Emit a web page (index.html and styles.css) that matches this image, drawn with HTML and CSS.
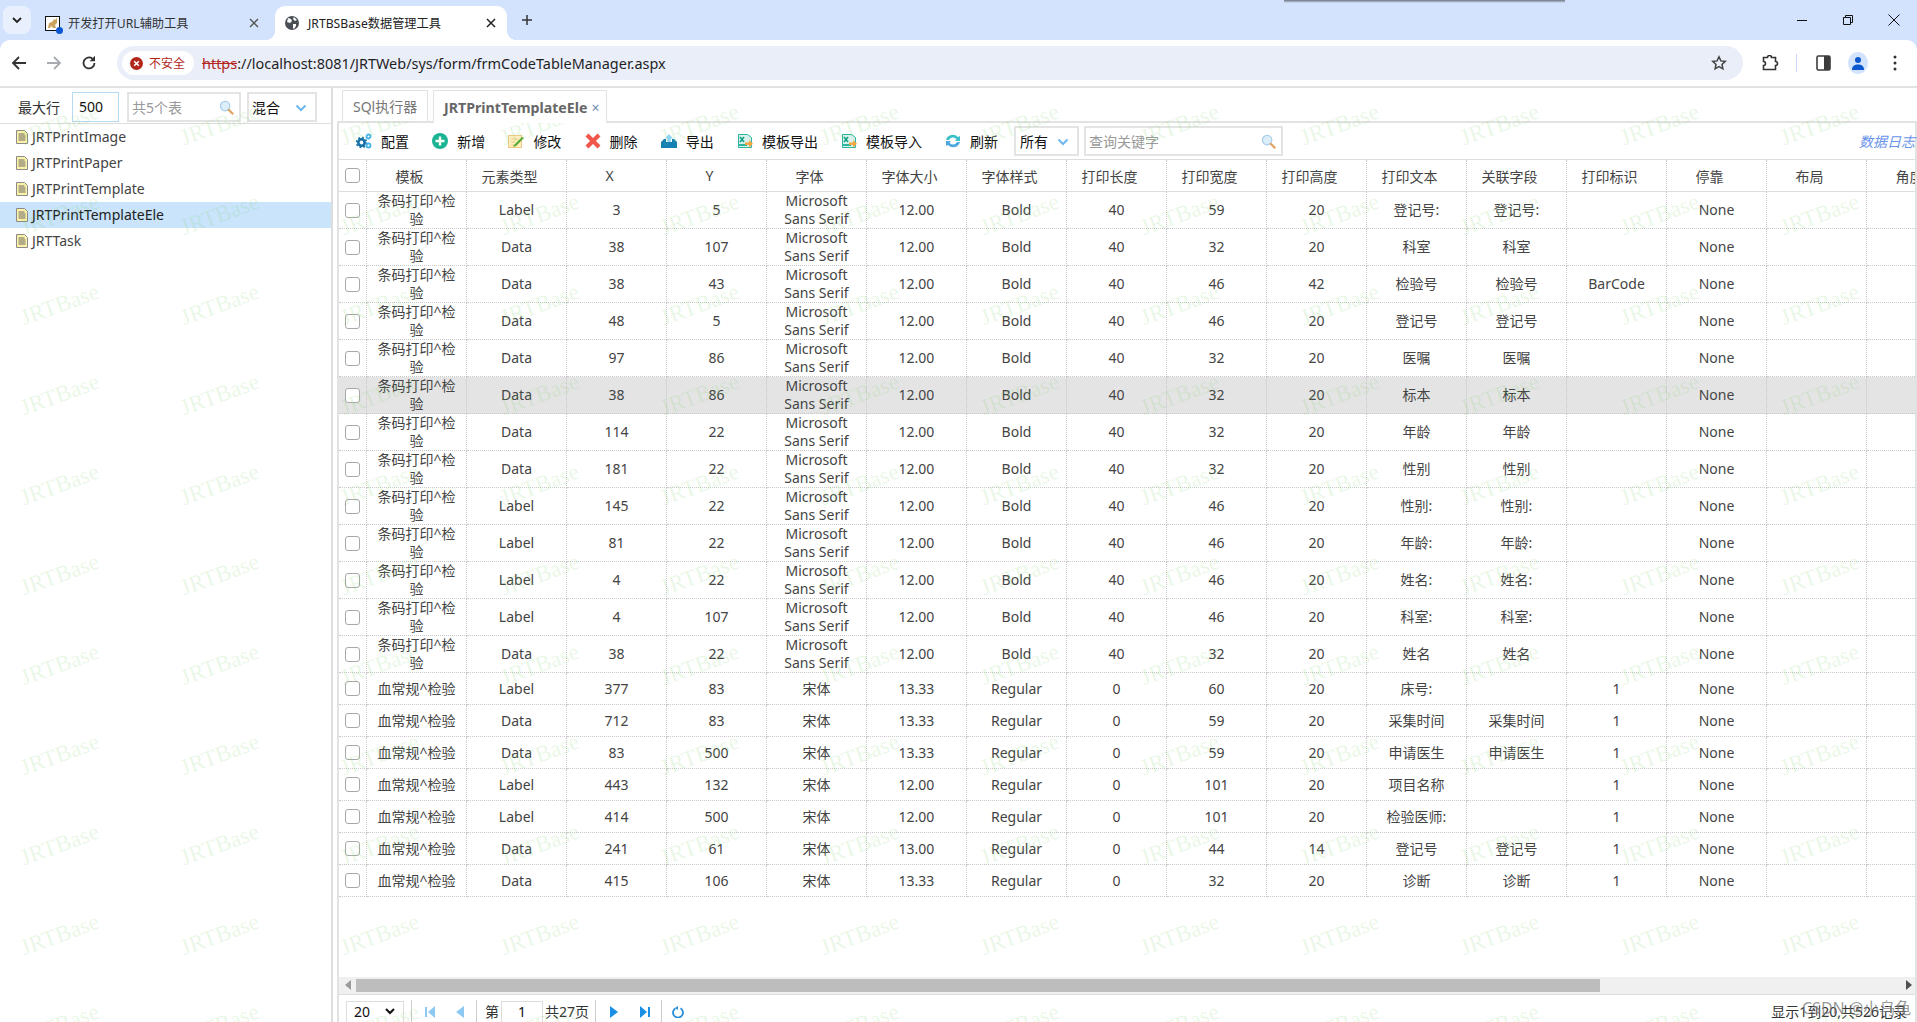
FILE: index.html
```html
<!DOCTYPE html>
<html lang="zh-CN">
<head>
<meta charset="utf-8">
<title>JRTBSBase数据管理工具</title>
<link rel="stylesheet" href="styles.css">
</head>
<body>
<svg class="sprite" aria-hidden="true">
  <symbol id="doc" viewBox="0 0 12 14"><path d="M.5.5h8l3 3v10H.5z" fill="#fdf3a8" stroke="#8a8a8a"/><path d="M2.5 4h6M2.5 6h7M2.5 8h7M2.5 10h7" stroke="#666" fill="none"/></symbol>
  <symbol id="lens" viewBox="0 0 16 16"><circle cx="6.5" cy="6.5" r="5" fill="#dbeefa" stroke="#a9cfe8" stroke-width="1.4"/><path d="M10.5 10.5l4 4" stroke="#e0a868" stroke-width="2.4" stroke-linecap="round"/></symbol>
  <symbol id="chev" viewBox="0 0 12 8"><path d="M1.5 1.5L6 6l4.5-4.5" fill="none" stroke="#6db7ee" stroke-width="2"/></symbol>
  <symbol id="xls" viewBox="0 0 16 16"><path d="M1.500 1.500h9l4 3v10h-13z" fill="#d7f2ec" stroke="#2cb59a"/><path d="M3 4l4 5M7 4L3 9" stroke="#18a085" stroke-width="1.600"/><path d="M2 12h8" stroke="#2cb59a" stroke-width="2"/></symbol>
</svg>

<header class="tabstrip">
  <div class="tab-menu"><svg width="12" height="8" viewBox="0 0 12 8"><path d="M2 2l4 4 4-4" fill="none" stroke="#222" stroke-width="1.800"/></svg></div>
  <div class="tab tab-idle">
    <span class="fav-cat">
      <svg width="15" height="15" viewBox="0 0 15 15"><rect x=".5" y=".5" width="14" height="14" fill="#fff" stroke="#111"/><path d="M3 12l1-5 3-1 2-3 1 1 2-2v5l-2 2 1 3H8L6 10l-1 2z" fill="#c9a35f"/></svg>
      <i class="fav-dot"></i>
    </span>
    <span class="tab-title">开发打开URL辅助工具</span>
    <svg class="tab-x" width="10" height="10" viewBox="0 0 10 10"><path d="M1 1l8 8M9 1L1 9" stroke="#555" stroke-width="1.400"/></svg>
  </div>
  <div class="tab tab-on">
    <svg width="14" height="14" viewBox="0 0 14 14"><circle cx="7" cy="7" r="7" fill="#4a4f55"/><path d="M3 2l3 1 1 2-2 2-3-1zM8 8l3 0 0 2-2 3-1-1zM9 1l3 3-2 1-2-2z" fill="#fff"/></svg>
    <span class="tab-title">JRTBSBase数据管理工具</span>
    <svg class="tab-x" width="10" height="10" viewBox="0 0 10 10"><path d="M1 1l8 8M9 1L1 9" stroke="#222" stroke-width="1.500"/></svg>
  </div>
  <svg class="tab-plus" width="12" height="12" viewBox="0 0 12 12"><path d="M6 1v10M1 6h10" stroke="#333" stroke-width="1.500"/></svg>
  <div class="winctl">
    <svg width="12" height="12" viewBox="0 0 12 12"><path d="M1 6.500h10" stroke="#111" stroke-width="1"/></svg>
    <svg width="12" height="12" viewBox="0 0 12 12"><path d="M1.500 3.500h7v7h-7zM3.500 3.500v-2h7v7h-2" fill="none" stroke="#111"/></svg>
    <svg width="12" height="12" viewBox="0 0 12 12"><path d="M.5.5l11 11M11.500.5l-11 11" stroke="#111"/></svg>
  </div>
  <i class="strip-shadow"></i>
</header>

<nav class="addr">
  <svg class="nav-ic" width="16" height="16" viewBox="0 0 16 16"><path d="M15 8H2M8 2L2 8l6 6" fill="none" stroke="#333" stroke-width="1.800"/></svg>
  <svg class="nav-ic" width="16" height="16" viewBox="0 0 16 16"><path d="M1 8h13M8 2l6 6-6 6" fill="none" stroke="#a8abb0" stroke-width="1.800"/></svg>
  <svg class="nav-ic" width="16" height="16" viewBox="0 0 16 16"><path d="M13.500 8A5.500 5.500 0 1 1 11.500 3.700" fill="none" stroke="#333" stroke-width="1.800"/><path d="M14 .8v5.400H8.600z" fill="#333"/></svg>
  <div class="omni">
    <div class="insecure">
      <svg width="13" height="13" viewBox="0 0 13 13"><circle cx="6.500" cy="6.500" r="6.500" fill="#b3261e"/><path d="M4.200 4.200l4.600 4.600M8.800 4.200L4.200 8.800" stroke="#fff" stroke-width="1.600"/></svg>
      <span>不安全</span>
    </div>
    <div class="url"><s class="scheme">https</s>://localhost:8081/JRTWeb/sys/form/frmCodeTableManager.aspx</div>
    <svg class="star" width="16" height="16" viewBox="0 0 16 16"><path d="M8 1.800l1.900 4.100 4.400.5-3.300 3 .9 4.400L8 11.600l-3.900 2.200.9-4.400-3.300-3 4.400-.5z" fill="none" stroke="#444" stroke-width="1.500"/></svg>
  </div>
  <svg class="puzzle" width="17" height="17" viewBox="0 0 17 17"><path d="M1.500 2.500h4a2 2 0 0 1 4 0h4v4a2 2 0 0 1 0 4v4h-12v-4a2 2 0 0 0 0-4z" fill="none" stroke="#333" stroke-width="1.600"/></svg>
  <i class="addr-div"></i>
  <svg class="panel-ic" width="15" height="16" viewBox="0 0 15 16"><rect x="1" y="1" width="13" height="14" rx="1.500" fill="#fff" stroke="#3c3c3c" stroke-width="1.600"/><rect x="8" y="1" width="6" height="14" fill="#3c3c3c"/></svg>
  <div class="profile"><svg width="14" height="14" viewBox="0 0 14 14"><circle cx="7" cy="4" r="3" fill="#0b57d0"/><path d="M1 14c0-4 2.500-5.500 6-5.500s6 1.500 6 5.500z" fill="#0b57d0"/></svg></div>
  <svg class="dots" width="4" height="16" viewBox="0 0 4 16"><circle cx="2" cy="2" r="1.500" fill="#333"/><circle cx="2" cy="8" r="1.500" fill="#333"/><circle cx="2" cy="14" r="1.500" fill="#333"/></svg>
</nav>

<main class="app">
  <aside class="side">
    <div class="side-bar">
      <label class="side-label">最大行</label>
      <input class="field field-max" value="500">
      <div class="field field-find"><span class="ph">共5个表</span><svg class="lens"><use href="#lens"/></svg></div>
      <div class="field field-mix"><span>混合</span><svg class="chev"><use href="#chev"/></svg></div>
    </div>
    <ul class="tree">
      <li class="tree-row"><svg class="doc"><use href="#doc"/></svg><span>JRTPrintImage</span></li>
      <li class="tree-row"><svg class="doc"><use href="#doc"/></svg><span>JRTPrintPaper</span></li>
      <li class="tree-row"><svg class="doc"><use href="#doc"/></svg><span>JRTPrintTemplate</span></li>
      <li class="tree-row is-on"><svg class="doc"><use href="#doc"/></svg><span>JRTPrintTemplateEle</span></li>
      <li class="tree-row"><svg class="doc"><use href="#doc"/></svg><span>JRTTask</span></li>
    </ul>
  </aside>

  <section class="main">
    <div class="tabs">
      <div class="ptab ptab-sql">SQl执行器</div>
      <div class="ptab ptab-on"><b>JRTPrintTemplateEle</b><span class="ptab-x">×</span></div>
    </div>
    <div class="panel">
      <div class="tools">
        <div class="btn"><svg class="ti" viewBox="0 0 16 16"><circle cx="5.500" cy="9.500" r="3.200" fill="none" stroke="#1670a6" stroke-width="2.600"/><circle cx="5.500" cy="9.500" r="5" fill="none" stroke="#1670a6" stroke-width="1.600" stroke-dasharray="1.900 2"/><circle cx="12.500" cy="3.500" r="2" fill="none" stroke="#45b4e8" stroke-width="1.800"/><circle cx="12.500" cy="12.500" r="2" fill="none" stroke="#45b4e8" stroke-width="1.800"/></svg><span>配置</span></div>
        <div class="btn"><svg class="ti" viewBox="0 0 16 16"><circle cx="8" cy="8" r="8" fill="#1ab394"/><path d="M8 3.500v9M3.500 8h9" stroke="#f4fff4" stroke-width="2.400"/></svg><span>新增</span></div>
        <div class="btn"><svg class="ti" viewBox="0 0 16 16"><rect x=".5" y="2.500" width="13" height="12" fill="#fdeebf" stroke="#f0c987"/><path d="M3 6h7M3 9h4M3 12h3" stroke="#f0c987"/><path d="M6 12l8-8 2 1-8 8-3 1z" fill="#55a92f"/></svg><span>修改</span></div>
        <div class="btn"><svg class="ti" viewBox="0 0 16 16"><path d="M2 2l12 12M14 2L2 14" stroke="#f0564a" stroke-width="4.200"/></svg><span>删除</span></div>
        <div class="btn"><svg class="ti" viewBox="0 0 16 16"><path d="M0 9l3-3h2v3h6V6h2l3 3v6H0z" fill="#1580b4"/><path d="M8 1l4 4.500H9.700V9H6.300V5.500H4z" fill="#8fd3f4"/></svg><span>导出</span></div>
        <div class="btn btn-wide"><svg class="ti" viewBox="0 0 16 16"><use href="#xls"/><path d="M8 9.500h4V7l4 3.700-4 3.700V12H8z" fill="#f4a640"/></svg><span>模板导出</span></div>
        <div class="btn btn-wide"><svg class="ti" viewBox="0 0 16 16"><use href="#xls"/><path d="M8 9.500h4V7l4 3.700-4 3.700V12H8z" fill="#f4a640"/></svg><span>模板导入</span></div>
        <div class="btn btn-last"><svg class="ti" viewBox="0 0 16 16"><path d="M1 7a7 7 0 0 1 12-3l2-1v5h-5l1.500-1.700A4.500 4.500 0 0 0 4 7z" fill="#3cc0c8"/><path d="M15 9a7 7 0 0 1-12 3l-2 1V8h5L4.500 9.700A4.500 4.500 0 0 0 12 9z" fill="#4fa8e0"/></svg><span>刷新</span></div>
        <div class="field field-all"><span>所有</span><svg class="chev"><use href="#chev"/></svg></div>
        <div class="field field-key"><span class="ph">查询关键字</span><svg class="lens"><use href="#lens"/></svg></div>
        <a class="log">数据日志</a>
      </div>
      <div class="gridwrap">
        <table class="grid">
          <thead id="ghead"></thead>
          <tbody id="gbody"></tbody>
        </table>
      </div>
      <div class="hscroll">
        <svg class="sa" width="6" height="10" viewBox="0 0 6 10"><path d="M6 0v10L0 5z" fill="#9a9a9a"/></svg>
        <div class="thumb"></div>
        <svg class="sa sa-r" width="6" height="10" viewBox="0 0 6 10"><path d="M0 0v10l6-5z" fill="#505050"/></svg>
      </div>
      <div class="pager">
        <div class="pg-size"><span>20</span><svg width="10" height="7" viewBox="0 0 10 7"><path d="M1 1l4 4 4-4" fill="none" stroke="#111" stroke-width="2"/></svg></div>
        <i class="pg-sep"></i>
        <svg class="pg-ic pg-first" width="10" height="12" viewBox="0 0 10 12"><path d="M0 1h2v10H0zM10 0v12L3 6z" fill="#8dc8f3"/></svg>
        <svg class="pg-ic pg-prev" width="8" height="12" viewBox="0 0 8 12"><path d="M8 0v12L0 6z" fill="#8dc8f3"/></svg>
        <i class="pg-sep pg-sep2"></i>
        <span class="pg-t">第</span>
        <input class="pg-no" value="1">
        <span class="pg-t">共27页</span>
        <i class="pg-sep pg-sep3"></i>
        <svg class="pg-ic pg-next" width="8" height="12" viewBox="0 0 8 12"><path d="M0 0v12l8-6z" fill="#1a8fe3"/></svg>
        <svg class="pg-ic pg-last" width="10" height="12" viewBox="0 0 10 12"><path d="M0 0v12l7-6zM8 1h2v10H8z" fill="#1a8fe3"/></svg>
        <i class="pg-sep pg-sep4"></i>
        <svg class="pg-ic pg-ref" width="12" height="12" viewBox="0 0 12 12"><path d="M3.500 2.200A5 5 0 1 0 8.500 2.200" fill="none" stroke="#2a8fd8" stroke-width="1.800"/><path d="M6 0v4L3 2z" fill="#2a8fd8"/></svg>
        <span class="pg-info">显示1到20,共526记录</span>
      </div>
    </div>
  </section>
</main>

<div class="wm" id="wm" aria-hidden="true"></div>
<div class="csdn">CSDN @小乌龟</div>
<script src="app.js"></script>
</body>
</html>
```

FILE: styles.css
```css
* { box-sizing: border-box; }
html, body { margin: 0; height: 100%; }
body {
  width: 1917px; height: 1022px; overflow: hidden; position: relative;
  display: flex; flex-direction: column; background: #fff; color: #333;
  font: 14px "Noto Sans", "Noto Sans CJK SC", sans-serif;
}
.sprite { position: absolute; width: 0; height: 0; }
ul { list-style: none; margin: 0; padding: 0; }

/* tab strip */
.tabstrip { height: 40px; flex: none; background: #d3e3fd; display: flex; align-items: flex-end; position: relative; font-size: 12.2px; color: #333; }
.tab-menu { position: relative; top: -6px; margin-left: 3px; width: 28px; height: 28px; border-radius: 8px; background: #e9f0fd; display: flex; align-items: center; justify-content: center; }
.tab { height: 34px; display: flex; align-items: center; position: relative; }
.tab-idle { width: 244px; padding: 0 16px 0 14px; }
.tab-on { width: 232px; padding: 0 11px 0 10px; background: #fff; border-radius: 10px 10px 0 0; color: #222; }
.tab-on::before, .tab-on::after { content: ""; position: absolute; bottom: 0; width: 10px; height: 10px; }
.tab-on::before { left: -10px; background: radial-gradient(circle at 0 0, #d3e3fd 10px, #fff 10.500px); }
.tab-on::after { right: -10px; background: radial-gradient(circle at 100% 0, #d3e3fd 10px, #fff 10.500px); }
.tab-title { margin-left: 8px; white-space: nowrap; }
.tab-on .tab-title { margin-left: 9px; }
.tab-x { margin-left: auto; }
.fav-cat { position: relative; display: flex; width: 15px; height: 15px; }
.fav-dot { position: absolute; right: -3px; bottom: -3px; width: 7px; height: 7px; border-radius: 50%; background: #0b57d0; }
.tab-plus { position: relative; top: -14px; margin-left: 14px; }
.winctl { position: absolute; right: 17px; top: 14px; display: flex; gap: 34px; }
.strip-shadow { position: absolute; left: 1284px; top: 0; width: 281px; height: 3px; background: linear-gradient(#6d7480, #d3e3fd); }

/* address row */
.addr { height: 46px; flex: none; display: flex; align-items: center; padding-left: 11px; background: #fff; border-radius: 10px 10px 0 0; box-shadow: 0 -10px 0 #d3e3fd; }
.nav-ic { margin-right: 19px; flex: none; }
.nav-ic:nth-of-type(3) { margin-right: 0; }
.omni { width: 1626px; margin-left: 20px; height: 34px; border-radius: 17px; background: #e9eef9; display: flex; align-items: center; padding-left: 5px; flex: none; }
.insecure { width: 72px; height: 24px; border-radius: 12px; background: #fff; display: flex; align-items: center; padding-left: 8px; gap: 6px; font-size: 12px; color: #b3261e; }
.url { margin-left: 8px; font-size: 14.45px; color: #1f1f1f; white-space: nowrap; }
.scheme { color: #b3261e; }
.star { margin-left: auto; margin-right: 16px; }
.puzzle { margin-left: 19px; flex: none; }
.addr-div { width: 1px; height: 18px; background: #c6d8f6; margin-left: 17px; flex: none; }
.panel-ic { margin-left: 19px; flex: none; }
.profile { width: 20px; height: 22px; border-radius: 50%; background: #d3e3fd; margin-left: 17px; display: flex; align-items: center; justify-content: center; flex: none; }
.dots { margin-left: 25px; flex: none; }

/* app */
.app { flex: 1; min-height: 0; display: flex; border-top: 2px solid #e2e2e2; overflow: hidden; }
.side { width: 333px; flex: none; border-right: 2px solid #ddd; }
.side-bar { height: 36px; border-bottom: 1px solid #ddd; display: flex; align-items: center; padding-top: 2px; }
.side-label { margin-left: 18px; width: 54px; color: #333; }
.field { height: 30px; border: 2px solid #e4e4e4; display: flex; align-items: center; position: relative; background: transparent; font: inherit; color: #111; }
.field-max { width: 47px; padding: 0 0 0 6px; border: 1px solid #b5daf4; outline: 0; }
.field-find { width: 114px; margin-left: 8px; padding-left: 3px; }
.field-mix { width: 70px; margin-left: 6px; padding-left: 3px; }
.ph { color: #999; }
.lens { position: absolute; right: 5px; top: 6px; width: 15px; height: 15px; }
.chev { position: absolute; right: 8px; top: 10px; width: 12px; height: 8px; }
.tree-row { height: 26px; display: flex; align-items: center; padding-left: 16px; color: #444; white-space: nowrap; }
.tree-row span { position: relative; top: -1px; }
.tree-row.is-on { background: #c9e4fb; color: #222; }
.doc { width: 12px; height: 14px; margin-right: 4px; flex: none; }

.main { width: 1580px; margin-left: 4px; flex: none; display: flex; flex-direction: column; min-height: 0; }
.tabs { height: 33px; padding: 2px 0 0 5px; display: flex; gap: 5px; flex: none; }
.ptab { height: 33px; border: 1px solid #e2e2e2; border-bottom: 0; background: #fff; display: flex; align-items: center; color: #777; position: relative; z-index: 1; }
.ptab-sql { width: 86px; height: 31px; padding-left: 10px; }
.ptab-on { width: 174px; padding-left: 10px; color: #666; }
.ptab-on b { font-weight: 700; font-size: 14.2px; }
.ptab-x { margin-left: 4px; color: #6d8bb0; }
.panel { flex: 1; min-height: 0; display: flex; flex-direction: column; border: 2px solid #e2e2e2; border-bottom: 0; }
.tools { height: 37px; flex: none; display: flex; align-items: center; border-bottom: 1px solid #ddd; padding-left: 17px; color: #111; white-space: nowrap; }
.btn { width: 76.2px; display: flex; align-items: center; gap: 9px; flex: none; }
.btn-wide { width: 104px; }
.btn-last { width: 69px; }
.ti { width: 16px; height: 16px; flex: none; }
.field-all { width: 65px; padding-left: 4px; height: 30px; }
.field-key { width: 199px; margin-left: 5px; padding-left: 3px; }
.log { margin-left: auto; font-style: italic; color: #6a94ea; }

.gridwrap { flex: 1; min-height: 0; overflow: hidden; }
.grid { border-collapse: separate; border-spacing: 0; table-layout: fixed; width: 1628px; text-align: center; color: #444; }
.grid th { font-weight: 400; height: 32px; border-bottom: 1px solid #ddd; border-right: 1px dotted #c8c8c8; padding: 0 14px 0 0; }
.grid td { border-bottom: 1px dotted #c8c8c8; border-right: 1px dotted #c8c8c8; padding: 0 8px; line-height: 18px; }
.grid .cb-col { width: 28px; padding: 0; }
.grid .dc { width: 100px; }
.r2 td { height: 37px; }
.r1 td { height: 32px; }
.is-sel td { background: #e4e4e4; }
.cb { display: block; width: 15px; height: 15px; margin: 0 auto 0 6px; border: 1.500px solid #a8a8a8; border-radius: 3px; background: #fff; }
.grid td.cb-col { padding: 0; }

.hscroll { height: 18px; flex: none; background: #f0f0f0; position: relative; display: flex; align-items: center; border-bottom: 1px solid #ddd; }
.sa { position: absolute; left: 6px; top: 3px; }
.sa-r { left: auto; right: 3px; }
.thumb { position: absolute; left: 17px; width: 1244px; top: 2px; height: 13px; background: #bdbdbd; }

.pager { height: 27px; flex: none; display: flex; align-items: flex-start; padding-top: 6px; position: relative; color: #333; }
.pager > * { flex: none; }
.pg-size { width: 58px; height: 24px; margin-left: 7px; border: 1px solid #ddd; display: flex; align-items: center; justify-content: space-between; padding: 0 8px 4px 7px; color: #111; }
.pg-sep { width: 1px; height: 22px; background: #ccc; margin-left: 7px; margin-top: -1px; }
.pg-ic { margin-top: 5px; }
.pg-first { margin-left: 13px; }
.pg-prev { margin-left: 21px; }
.pg-sep2 { margin-left: 12px; }
.pg-t { line-height: 22px; margin-left: 8px; }
.pg-no { width: 42px; height: 24px; margin-left: 2px; border: 1px solid #ddd; text-align: center; font: inherit; color: #111; padding: 0 0 3px; outline: 0; }
.pg-no + .pg-t { margin-left: 2px; }
.pg-sep3 { margin-left: 6px; }
.pg-next { margin-left: 14px; }
.pg-last { margin-left: 22px; }
.pg-sep4 { margin-left: 11px; }
.pg-ref { margin-left: 10px; }
.pg-info { margin-left: auto; margin-right: 8px; line-height: 22px; white-space: nowrap; }

/* overlays */
.wm { position: absolute; left: 0; top: 86px; width: 1917px; height: 936px; overflow: hidden; pointer-events: none; }
.wm-grid { display: grid; grid-template-columns: repeat(12, 160px); grid-auto-rows: 90px; margin: -6px 0 0 -20px; }
.wm-grid span { place-self: center; font: 23px "Liberation Serif", serif; color: rgba(120, 205, 100, .17); transform: rotate(-20deg); white-space: nowrap; }
.csdn { position: absolute; left: 1802px; top: 995px; font-size: 16px; color: rgba(120, 120, 120, .75); white-space: nowrap; pointer-events: none; }
```

FILE: app.js
```js
var MSS = 'Microsoft Sans Serif';
var A = '条码打印^检验', B = '血常规^检验';
var heads = ['模板','元素类型','X','Y','字体','字体大小','字体样式','打印长度','打印宽度','打印高度','打印文本','关联字段','打印标识','停靠','布局','角度'];
var rows = [
  [A,'Label',3,5,MSS,'12.00','Bold',40,59,20,'登记号:','登记号:',''],
  [A,'Data',38,107,MSS,'12.00','Bold',40,32,20,'科室','科室',''],
  [A,'Data',38,43,MSS,'12.00','Bold',40,46,42,'检验号','检验号','BarCode'],
  [A,'Data',48,5,MSS,'12.00','Bold',40,46,20,'登记号','登记号',''],
  [A,'Data',97,86,MSS,'12.00','Bold',40,32,20,'医嘱','医嘱',''],
  [A,'Data',38,86,MSS,'12.00','Bold',40,32,20,'标本','标本',''],
  [A,'Data',114,22,MSS,'12.00','Bold',40,32,20,'年龄','年龄',''],
  [A,'Data',181,22,MSS,'12.00','Bold',40,32,20,'性别','性别',''],
  [A,'Label',145,22,MSS,'12.00','Bold',40,46,20,'性别:','性别:',''],
  [A,'Label',81,22,MSS,'12.00','Bold',40,46,20,'年龄:','年龄:',''],
  [A,'Label',4,22,MSS,'12.00','Bold',40,46,20,'姓名:','姓名:',''],
  [A,'Label',4,107,MSS,'12.00','Bold',40,46,20,'科室:','科室:',''],
  [A,'Data',38,22,MSS,'12.00','Bold',40,32,20,'姓名','姓名',''],
  [B,'Label',377,83,'宋体','13.33','Regular',0,60,20,'床号:','',1],
  [B,'Data',712,83,'宋体','13.33','Regular',0,59,20,'采集时间','采集时间',1],
  [B,'Data',83,500,'宋体','13.33','Regular',0,59,20,'申请医生','申请医生',1],
  [B,'Label',443,132,'宋体','12.00','Regular',0,101,20,'项目名称','',1],
  [B,'Label',414,500,'宋体','12.00','Regular',0,101,20,'检验医师:','',1],
  [B,'Data',241,61,'宋体','13.00','Regular',0,44,14,'登记号','登记号',1],
  [B,'Data',415,106,'宋体','13.33','Regular',0,32,20,'诊断','诊断',1]
];
var cb = '<i class="cb"></i>';
document.getElementById('ghead').innerHTML =
  '<tr><th class="cb-col">' + cb + '</th>' +
  heads.map(function (h) { return '<th class="dc">' + h + '</th>'; }).join('') + '</tr>';
document.getElementById('gbody').innerHTML = rows.map(function (r, i) {
  var cls = (r[0] === A ? 'r2' : 'r1') + (i === 5 ? ' is-sel' : '');
  var cells = r.concat(['None', '', '']);
  return '<tr class="' + cls + '"><td class="cb-col">' + cb + '</td>' +
    cells.map(function (c) { return '<td>' + c + '</td>'; }).join('') + '</tr>';
}).join('');
var wm = '';
for (var n = 0; n < 132; n++) wm += '<span>JRTBase</span>';
document.getElementById('wm').innerHTML = '<div class="wm-grid">' + wm + '</div>';
```
